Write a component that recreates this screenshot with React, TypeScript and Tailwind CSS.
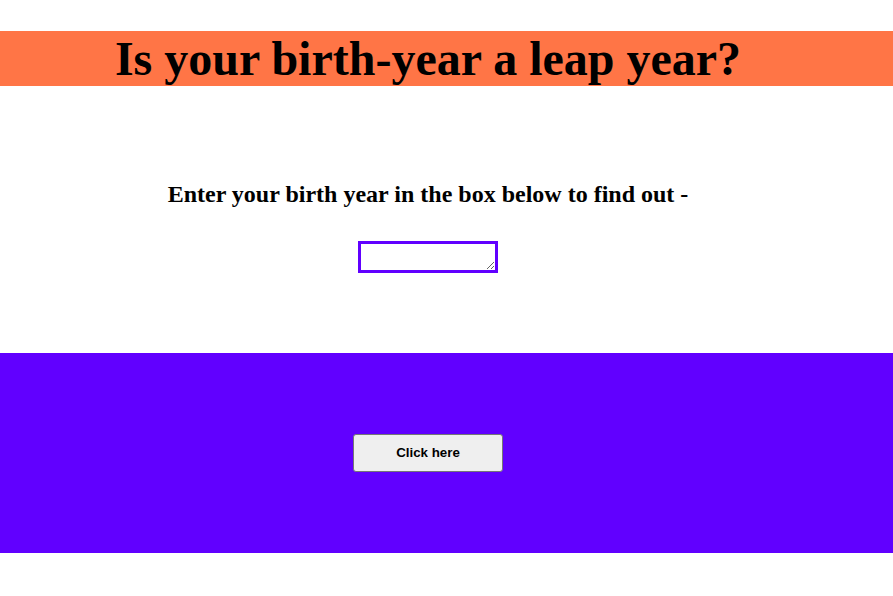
export default function App() {
  return (
    <div className="min-h-screen bg-white" style={{ fontFamily: '"Liberation Serif", serif' }}>
      <div className="h-[31px]" />
      <h1 className="bg-[#ff7546] text-black font-bold text-[48px] leading-[55px] h-[55px] text-center pr-[37px] whitespace-nowrap">
        Is your birth-year a leap year?
      </h1>

      <div className="pr-[37px] flex flex-col items-center">
        <h2 className="mt-[94px] text-[24px] font-bold leading-[28px] text-black">
          Enter your birth year in the box below to find out -
        </h2>
        <textarea
          className="mt-[33px] w-[140px] h-[32px] border-[3px] border-[#6100ff] bg-white outline-none resize-y"
          rows={1}
        />
      </div>

      <div className="mt-[80px] h-[200px] bg-[#6100ff] flex items-center justify-center pr-[37px]">
        <button
          className="w-[150px] h-[38px] bg-[#efefef] border border-[#767676] rounded-[3px] text-[13.33px] font-bold text-black"
          style={{ fontFamily: '"Liberation Sans", Arial, sans-serif' }}
        >
          Click here
        </button>
      </div>
    </div>
  );
}
